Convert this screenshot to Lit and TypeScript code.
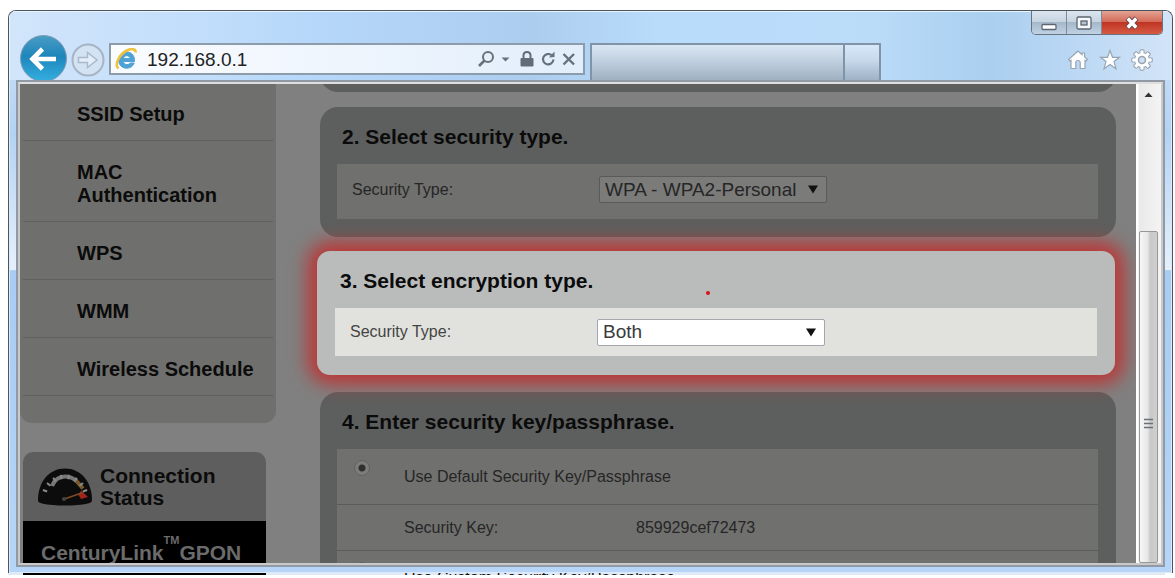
import { LitElement, html, css, svg } from "lit";
import { customElement, state } from "lit/decorators.js";

const NAV_ITEMS = ["SSID Setup", "MAC Authentication", "WPS", "WMM", "Wireless Schedule"];

const gear = Array.from({ length: 8 }, (_, i) => i * 45);
const ticks = [-160, -140, -120, -100, -80, -60, -40, -20];

@customElement("app-root")
export class AppRoot extends LitElement {
  @state() private keyMode = "default";

  static styles = css`
    :host {
      display: flex;
      flex-direction: column;
      box-sizing: border-box;
      height: 100vh;
      padding: 10px 2px 3px 8px;
      overflow: hidden;
      background: #fff;
      font-family: "Liberation Sans", Arial, sans-serif;
      color: #0b0b0b;
    }
    *, *::before, *::after { box-sizing: border-box; }
    button, select, input { font: inherit; color: inherit; margin: 0; }
    button { border: 0; padding: 0; background: none; display: grid; place-items: center; }
    svg { display: block; }

    .window {
      flex: 1;
      min-height: 0;
      display: flex;
      flex-direction: column;
      border: 1px solid #4b5560;
      border-bottom: 0;
      border-radius: 8px 8px 0 0;
      overflow: hidden;
      background: linear-gradient(180deg, #cfe2f8 0%, #b4d3f4 22%, #e6f0fb 46%, #a8ccf4 46.2%, #b6d5f8 100%);
      box-shadow: inset 0 0 0 1px #dbe9f8;
    }

    .chrome {
      flex: none;
      background: linear-gradient(90deg, #d2e5fb 0%, #c2defb 16%, #b4d6f9 28%, #adcdef 45%, #b9dcfb 56%, #bbdcf9 74%, #aacfef 84%, #bbd8f4 92%, #d3e4f7 100%);
      box-shadow: inset 0 1px 0 #eaf3fd, inset 1px 0 0 #eaf3fd;
    }
    .title-row { display: flex; justify-content: flex-end; height: 24px; padding-right: 9px; }
    .caption {
      display: flex;
      border: 1px solid #68747f;
      border-top: 0;
      border-radius: 0 0 5px 5px;
      overflow: hidden;
    }
    .caption button {
      width: 35px;
      border-right: 1px solid #7e8b98;
      background: linear-gradient(180deg, #dbe5ef 0%, #c6d4e1 48%, #a5b8ca 50%, #c0d3e4 100%);
    }
    .caption .close {
      width: 60px;
      border-right: 0;
      background: linear-gradient(180deg, #e2a393 0%, #d56b5a 46%, #bf3524 50%, #d65a43 100%);
    }

    .nav-row { display: flex; height: 45px; padding-left: 11px; overflow: hidden; }
    .back { flex: none; align-self: flex-start; width: 47px; height: 47px; }
    .forward { flex: none; width: 34px; height: 34px; margin: 8px 4px 0 4px; }
    .address {
      flex: 472 1 0;
      min-width: 0;
      display: flex;
      align-items: center;
      height: 32px;
      margin-top: 8px;
      padding: 0 4px;
      border: 2px solid #8d9cab;
      background: linear-gradient(90deg, #fafcff, #e2eefb);
    }
    .address input {
      flex: 1;
      min-width: 0;
      margin-left: 10px;
      padding: 2px 0 0;
      border: 0;
      outline: 0;
      background: none;
      font-size: 19px;
      color: #222;
    }
    .address .tools { display: flex; align-items: center; }
    .tabs { flex: 292 1 0; display: flex; margin: 8px 0 0 5px; border: 1px solid #8194a7; border-width: 2px 2px 0; }
    .tab { flex: 1; background: linear-gradient(180deg, #d9e6f3 0%, #c1d0e0 45%, #9fb0c1 100%); }
    .new-tab { width: 36px; border-left: 2px solid #8194a7; background: linear-gradient(180deg, #d6e8fa 0%, #c6d8ea 45%, #9eb2c6 100%); }
    .spacer { flex: 188 1 0; }
    .commands { flex: none; display: flex; align-items: center; gap: 8px; padding: 4px 18px 0 0; }

    .frame {
      flex: 1;
      min-height: 0;
      display: flex;
      margin: 0 7px 6px;
      border: 2px solid #8f9aa5;
    }
    .viewport {
      flex: 1;
      min-width: 0;
      display: flex;
      border: 2px solid #c9c9c9;
      border-top-color: #dedede;
      overflow: hidden;
    }
    .page {
      flex: 1;
      min-width: 0;
      display: flex;
      align-items: flex-start;
      gap: 44px;
      padding-right: 20px;
      background: #808080;
      overflow: hidden;
    }

    .sidebar { flex: none; width: 256px; }
    .menu {
      margin: -1px 0 0;
      padding: 0 3px 27px;
      list-style: none;
      background: #6f6f6d;
      border-radius: 0 0 12px 12px;
    }
    .menu li { border-bottom: 1px solid #5f5f5e; padding: 20px 12px 14px 54px; }
    .menu a { display: block; color: inherit; text-decoration: none; font-size: 20px; font-weight: bold; line-height: 23px; white-space: nowrap; }
    .menu a.wrap { white-space: normal; width: 160px; }

    .status { width: 243px; margin: 29px 0 0 3px; border-radius: 10px 10px 0 0; overflow: hidden; background: #5e5e5e; }
    .status-head { display: flex; align-items: center; gap: 7px; height: 69px; padding: 0 14px; }
    .status-head h2 { margin: 0; font-size: 21px; line-height: 22px; }
    .status-name { display: flex; height: 90px; padding: 12px 17px 0 18px; background: #000; color: #6b6b6b; font-size: 21px; font-weight: bold; line-height: 40px; white-space: nowrap; }
    .status-name sup { font-size: 11px; line-height: 14px; vertical-align: baseline; }

    .main { flex: 1; min-width: 0; }
    .panel { background: #5d5f5e; border-radius: 18px; padding: 0 18px 18px 17px; }
    .panel-tail { margin: -28px 0 15px; padding: 18px; }
    .panel h2 { margin: 0; padding: 18px 0 15px 5px; font-size: 21px; line-height: 24px; white-space: nowrap; }
    .body { background: #70706e; color: #262626; font-size: 16px; }
    .field { display: flex; align-items: center; height: 55px; padding: 0 15px 4px; }
    .field label { width: 247px; }
    .panel.active {
      position: relative;
      margin: 14px 1px 17px -3px;
      padding: 0 18px 19px;
      background: #babcbb;
      border-radius: 13px;
      box-shadow: 0 0 18px 9px #bc3636;
    }
    .active .body { background: #e1e2dd; color: #444; }
    .active .field { height: 48px; padding: 0 15px; }
    .dot { position: absolute; left: 389px; top: 40px; width: 4px; height: 4px; border-radius: 2px; background: #d8121c; }

    .select { display: grid; align-items: center; }
    .select > * { grid-area: 1 / 1; }
    .select select {
      appearance: none;
      width: 228px;
      height: 27px;
      padding: 0 24px 0 5px;
      border: 1px solid #5a5a5a;
      border-radius: 2px;
      background: #7b7b7a;
      font-size: 19px;
      line-height: 24px;
      color: #262626;
    }
    .active .select select { background: #fff; border-color: #a5a5ad; color: #3a3a3a; }
    .select svg { justify-self: end; margin-right: 9px; pointer-events: none; }

    .key-row { display: flex; align-items: center; height: 56px; padding-left: 17px; border-bottom: 1px solid #5b5b5a; white-space: nowrap; }
    .key-row.detail { height: 46px; padding-left: 67px; }
    .key-row .name { width: 232px; }
    .key-row input {
      appearance: none;
      align-self: flex-start;
      width: 16px;
      height: 16px;
      margin: 11px 34px 0 0;
      border: 1px solid #626262;
      border-radius: 50%;
      background: #7c7c7b;
    }
    .key-row input:checked { background: radial-gradient(circle, #2f2f2f 0 3px, #7c7c7b 4px); }

    .scrollbar { flex: none; width: 25px; display: flex; flex-direction: column; padding: 0 3px; background: linear-gradient(90deg, #fff 0 2px, #e9e9e9 3px, #f4f4f4 100%); }
    .scrollbar .up { flex: none; height: 20px; margin-bottom: 127px; }
    .thumb { flex: 1; display: grid; place-items: center; padding-top: 54px; border: 1px solid #979797; border-radius: 2px; background: linear-gradient(90deg, #f6f6f6 0%, #e7e7e7 45%, #c8c8c8 60%, #cfcfcf 100%); }

    .below { flex: none; display: flex; height: 2px; overflow: hidden; margin-right: 8px; padding-left: 15px; background: #dfeaf6; }
    .below .black { width: 243px; background: #000; }
    .below label { margin-left: 138px; font-size: 16px; line-height: 10px; color: #111; white-space: nowrap; }
  `;

  private arrow() {
    return html`<svg width="10" height="9" viewBox="0 0 10 9" aria-hidden="true"><path d="M0 0.500H10L5 8.500Z" fill="#111" /></svg>`;
  }

  private chrome() {
    return html`
      <header class="chrome">
        <div class="title-row">
          <div class="caption">
            <button aria-label="Minimize">
              <svg width="18" height="22" viewBox="0 0 18 22"><rect x="2" y="12.500" width="14" height="5" rx="1" fill="#fff" stroke="#5c6672" stroke-width="1.300" /></svg>
            </button>
            <button aria-label="Maximize">
              <svg width="16" height="16" viewBox="0 0 16 16"><rect x="1" y="2" width="14" height="12" rx="1.500" fill="#f6f8fa" stroke="#5c6672" stroke-width="1.300" /><rect x="5" y="6" width="6" height="4" fill="#b7c5d3" stroke="#5c6672" stroke-width="1.300" /></svg>
            </button>
            <button class="close" aria-label="Close">
              <svg width="16" height="14" viewBox="0 0 16 14"><path d="M3.500 2L12.500 12M12.500 2L3.500 12" stroke="#6b4a4e" stroke-width="5.500" /><path d="M3.800 2.500L12.200 11.500M12.200 2.500L3.800 11.500" stroke="#fff" stroke-width="3.400" /></svg>
            </button>
          </div>
        </div>
        <div class="nav-row">
          <button class="back" aria-label="Back">
            <svg width="47" height="47" viewBox="0 0 47 47">
              <defs><linearGradient id="bk" x1="0" y1="0" x2="0" y2="1"><stop offset="0" stop-color="#4a9cc4" /><stop offset="0.450" stop-color="#1e86bb" /><stop offset="1" stop-color="#35aee0" /></linearGradient></defs>
              <circle cx="23.500" cy="23.500" r="23" fill="url(#bk)" stroke="#7f9bb4" />
              <path d="M22.500 14L12.500 24L22.500 34M13 24H36" fill="none" stroke="#fff" stroke-width="4.600" />
            </svg>
          </button>
          <button class="forward" aria-label="Forward">
            <svg width="34" height="34" viewBox="0 0 34 34">
              <circle cx="17" cy="17" r="15.500" fill="#d3e3f4" stroke="#a6b4c3" stroke-width="2" />
              <path d="M7.500 14.500H16.500V9.500L26 17L16.500 24.500V19.500H7.500Z" fill="#e4eefa" stroke="#a9b9ca" stroke-width="1.500" />
            </svg>
          </button>
          <div class="address">
            <svg width="22" height="22" viewBox="0 0 22 22" aria-hidden="true">
              <path d="M19.500 13.500H8.300C8.600 15.500 10.200 16.600 12 16.600C13.400 16.600 14.500 16 15.200 15H19.200C18 18.400 15.200 20.200 11.800 20.200C7.200 20.200 3.600 17 3.600 12.200C3.600 7.500 7.200 4 11.800 4C16.600 4 19.900 7.800 19.500 13.500ZM8.400 10.600H15.200C14.900 8.800 13.500 7.700 11.800 7.700C10.100 7.700 8.800 8.800 8.400 10.600Z" fill="#4fa3d4" stroke="#4fa3d4" />
              <path d="M3.500 20.500C-1 17 4 7 11 3C16 0 21 0.500 20.500 4.500" fill="none" stroke="#efc23c" stroke-width="2.600" />
            </svg>
            <input aria-label="Address" .value=${"192.168.0.1"} />
            <div class="tools">
              <button aria-label="Search"><svg width="20" height="20" viewBox="0 0 20 20"><circle cx="12" cy="8" r="5" fill="none" stroke="#66717c" stroke-width="2" /><path d="M8.500 11.500L3 17" stroke="#66717c" stroke-width="2.600" /></svg></button>
              <button aria-label="Search options"><svg width="20" height="20" viewBox="0 0 20 20"><path d="M5.500 8.500H13.500L9.500 12.500Z" fill="#66717c" /></svg></button>
              <svg width="22" height="20" viewBox="0 0 22 20" role="img" aria-label="Secure"><rect x="4.500" y="9" width="13" height="8.500" rx="1" fill="#626c76" /><path d="M7.500 9.500V6.500C7.500 1.800 14.500 1.800 14.500 6.500V9.500" fill="none" stroke="#626c76" stroke-width="2" /></svg>
              <button aria-label="Refresh"><svg width="21" height="20" viewBox="0 0 21 20"><path d="M13.500 6.200A5.200 5.200 0 1 0 15.400 10.500" fill="none" stroke="#66717c" stroke-width="2.200" /><path d="M11 8.500L16.500 8V2.500Z" fill="#66717c" /></svg></button>
              <button aria-label="Stop"><svg width="20" height="20" viewBox="0 0 20 20"><path d="M4.500 5L15 15.500M15 5L4.500 15.500" stroke="#66717c" stroke-width="2.400" /></svg></button>
            </div>
          </div>
          <div class="tabs"><div class="tab"></div><div class="new-tab"></div></div>
          <div class="spacer"></div>
          <div class="commands">
            <button aria-label="Home"><svg width="24" height="24" viewBox="0 0 24 24"><path d="M12 3L2.500 11.500L4 13L5 12.300V20.500H9.800V14.500C9.800 11.800 14.200 11.800 14.200 14.500V20.500H19V12.300L20 13L21.500 11.500L18.500 8.800V5H16V6.600Z" fill="#fff" stroke="#97a5b3" stroke-width="1.200" /></svg></button>
            <button aria-label="Favorites"><svg width="24" height="24" viewBox="0 0 24 24"><path d="M12 2.500L14.500 9.300H21.500L16 13.600L18 20.800L12 16.600L6 20.800L8 13.600L2.500 9.300H9.500Z" fill="#fff" stroke="#97a5b3" stroke-width="1.200" /></svg></button>
            <button aria-label="Tools"><svg width="24" height="24" viewBox="0 0 24 24">
              ${gear.map((a) => svg`<rect x="10" y="1.800" width="4" height="5" rx="1" transform="rotate(${a} 12 12)" fill="#fff" stroke="#97a5b3" stroke-width="1.200" />`)}
              <circle cx="12" cy="12" r="7.500" fill="#fff" stroke="#97a5b3" stroke-width="1" />
              ${gear.map((a) => svg`<rect x="10.600" y="2.800" width="2.800" height="4" transform="rotate(${a} 12 12)" fill="#fff" />`)}
              <circle cx="12" cy="12" r="3.500" fill="#cfe0f2" stroke="#97a5b3" stroke-width="1.600" />
            </svg></button>
          </div>
        </div>
      </header>
    `;
  }

  private sidebar() {
    return html`
      <nav class="sidebar">
        <ul class="menu">
          ${NAV_ITEMS.map((t) => html`<li><a href="#" class=${t.startsWith("MAC") ? "wrap" : ""}>${t}</a></li>`)}
        </ul>
        <section class="status">
          <div class="status-head">
            <svg width="56" height="38" viewBox="0 0 56 38" aria-hidden="true">
              <path d="M1 32C1 14 12 0.500 28 0.500S55 14 55 32C55 34.500 53 35 51 35.500C38 38.300 18 38.300 5 35.500C3 35 1 34.500 1 32Z" fill="#0c0c0c" />
              <path d="M15 18C18 11 23 8.500 28 8.500C33 8.500 37 10.500 40 13.500" fill="none" stroke="#777" stroke-width="4" />
              <path d="M38.500 12L46 20.500" stroke="#7a5a2c" stroke-width="4" />
              <path d="M44 22.500L51 29L44 31L41.500 27Z" fill="#a3231c" />
              ${ticks.map((a) => svg`<path d="M47 30H51.500" transform="rotate(${a} 28 30)" stroke="#8a8a8a" stroke-width="2" />`)}
              <path d="M26 31.500L46 24.500" stroke="#7d4a24" stroke-width="1.800" />
              <circle cx="27" cy="31" r="2" fill="#444" />
            </svg>
            <h2>Connection<br />Status</h2>
          </div>
          <div class="status-name"><span>CenturyLink</span><sup>TM</sup><span>GPON</span></div>
        </section>
      </nav>
    `;
  }

  render() {
    return html`
      <div class="window">
        ${this.chrome()}
        <div class="frame">
          <div class="viewport">
            <div class="page">
              ${this.sidebar()}
              <main class="main">
                <div class="panel panel-tail"></div>
                <section class="panel">
                  <h2>2. Select security type.</h2>
                  <div class="body field">
                    <label for="security">Security Type:</label>
                    <div class="select"><select id="security"><option>WPA - WPA2-Personal</option></select>${this.arrow()}</div>
                  </div>
                </section>
                <section class="panel active">
                  <h2>3. Select encryption type.</h2>
                  <div class="body field">
                    <label for="encryption">Security Type:</label>
                    <div class="select"><select id="encryption"><option>Both</option></select>${this.arrow()}</div>
                  </div>
                  <span class="dot"></span>
                </section>
                <section class="panel">
                  <h2>4. Enter security key/passphrase.</h2>
                  <div class="body">
                    <div class="key-row">
                      <input type="radio" id="key-default" name="key" .checked=${this.keyMode === "default"} @change=${() => (this.keyMode = "default")} />
                      <label for="key-default">Use Default Security Key/Passphrase</label>
                    </div>
                    <div class="key-row detail"><span class="name">Security Key:</span><span>859929cef72473</span></div>
                    <div class="key-row">
                      <input type="radio" id="key-custom" name="key" .checked=${this.keyMode === "custom"} @change=${() => (this.keyMode = "custom")} />
                    </div>
                  </div>
                </section>
              </main>
            </div>
            <div class="scrollbar" aria-hidden="true">
              <svg class="up" width="19" height="20" viewBox="0 0 19 20"><path d="M5.500 13L9.500 8.500L13.500 13Z" fill="#333" /></svg>
              <div class="thumb">
                <svg width="10" height="12" viewBox="0 0 10 12"><path d="M0 1.500H9M0 5.500H9M0 9.500H9" stroke="#6a7078" stroke-width="1.600" /></svg>
              </div>
            </div>
          </div>
        </div>
      </div>
      <div class="below">
        <span class="black"></span>
        <label for="key-custom">Use Custom Security Key/Passphrase</label>
      </div>
    `;
  }
}
